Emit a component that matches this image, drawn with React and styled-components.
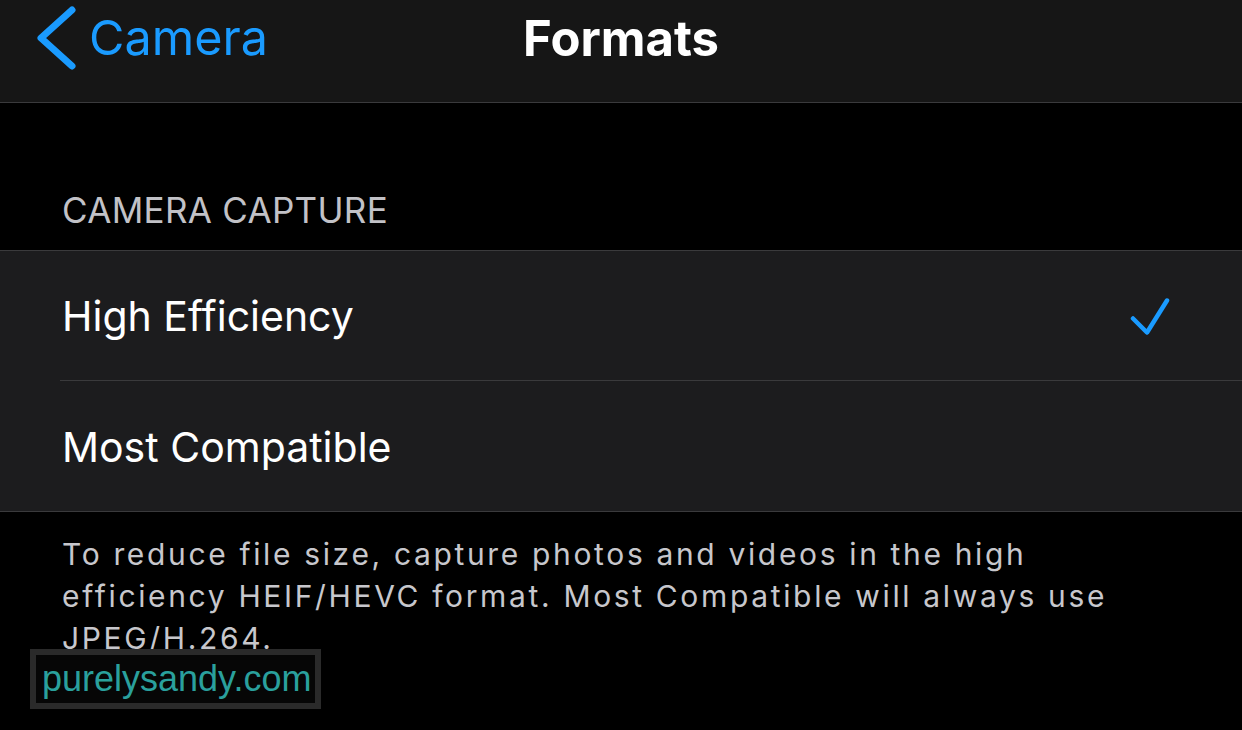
import React from 'react';
import styled, { createGlobalStyle } from 'styled-components';

// CSS
const GlobalStyle = createGlobalStyle`
body {
  margin: 0;
  background: #000;
  font-family: Inter, "Liberation Sans", sans-serif;
  -webkit-font-smoothing: antialiased;
}
`

const Page = styled.div`
position: relative;
width: 1242px;
height: 730px;
overflow: hidden;
background: #000;
`

const NavBar = styled.header`
display: grid;
grid-template-columns: 1fr auto 1fr;
align-items: center;
height: 68px;
padding: 4px 0 30px;
background: #161616;
border-bottom: 1px solid #3a3a3c;
`

const BackLink = styled.a`
display: flex;
align-items: center;
gap: 13px;
padding-left: 36px;
color: #1a9bff;
font-size: 48.5px;
line-height: 1;
text-decoration: none;
`

const Title = styled.h1`
margin: 0;
color: #fff;
font-size: 49px;
font-weight: 700;
line-height: 1;
`

const SectionTitle = styled.h2`
margin: 90px 0 22px;
padding-left: 62px;
color: #c2c2c7;
font-size: 35px;
font-weight: 400;
line-height: 35px;
letter-spacing: 0.3px;
`

const Group = styled.div`
background: #1c1c1e;
border-top: 1px solid #3a3a3c;
border-bottom: 1px solid #3a3a3c;
`

const Row = styled.div`
padding-left: 60px;
`

const RowInner = styled.div`
display: flex;
align-items: center;
justify-content: space-between;
height: 130px;
padding: 2px 72px 0 2px;
box-sizing: border-box;
border-bottom: ${p => (p.last ? 'none' : '1px solid #3a3a3c')};
color: #fff;
font-size: 41px;
line-height: 1;
`

const Footer = styled.p`
margin: 21px 0 0;
padding-left: 62px;
color: #c7c7cc;
font-size: 30px;
line-height: 42px;
letter-spacing: 2.65px;
`

const Watermark = styled.div`
position: absolute;
left: 30px;
top: 649px;
padding: 0 4px 0 6px;
background: #060606;
border: 6px solid #2a2a2a;
color: #2aa09d;
font-family: "Liberation Sans", Arial, sans-serif;
font-size: 36px;
line-height: 48px;
`

function Chevron() {
    return (
        <svg width="40" height="64" viewBox="0 0 40 64">
            <path d="M36 4 L5 32 L36 60" fill="none" stroke="#1a9bff" strokeWidth="7" strokeLinecap="round" strokeLinejoin="round" />
        </svg>
    )
}

function Check() {
    return (
        <svg width="40" height="40" viewBox="0 0 40 40">
            <path d="M3 21.5 L17 35.5 L37 3.5" fill="none" stroke="#1a9bff" strokeWidth="4.5" strokeLinecap="round" strokeLinejoin="round" />
        </svg>
    )
}

const options = [
    { label: 'High Efficiency', selected: true },
    { label: 'Most Compatible', selected: false },
]

// Code for Component starts here
function App() {

    return (
        <Page>
            <GlobalStyle />
            <NavBar>
                <BackLink href="#"><Chevron />Camera</BackLink>
                <Title>Formats</Title>
                <div />
            </NavBar>
            <SectionTitle>CAMERA CAPTURE</SectionTitle>
            <Group>
                {options.map((o, i) => (
                    <Row key={o.label}>
                        <RowInner last={i === options.length - 1}>
                            <span>{o.label}</span>
                            {o.selected && <Check />}
                        </RowInner>
                    </Row>
                ))}
            </Group>
            <Footer>
                To reduce file size, capture photos and videos in the high<br />
                efficiency HEIF/HEVC format. Most Compatible will always use<br />
                JPEG/H.264.
            </Footer>
            <Watermark>purelysandy.com</Watermark>
        </Page>
    )

}


export default App;
